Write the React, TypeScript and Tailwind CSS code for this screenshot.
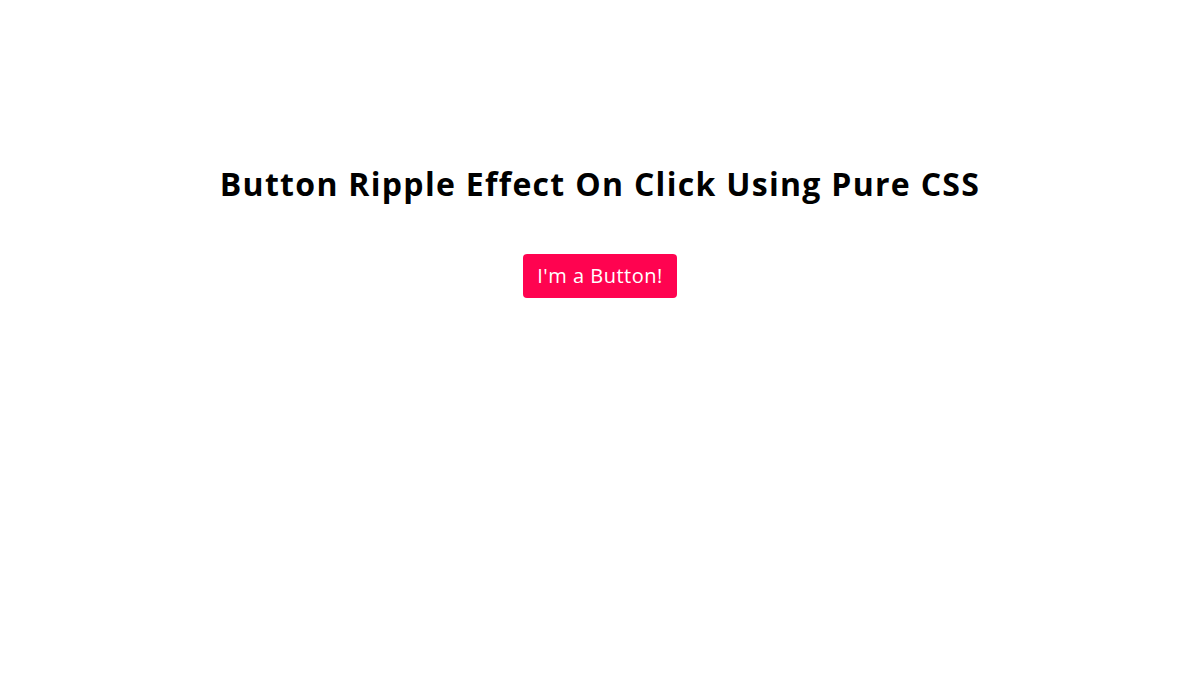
export default function App() {
  return (
    <div
      className="min-h-screen bg-white flex flex-col items-center pt-[163px]"
      style={{ fontFamily: '"Open Sans", "Noto Sans", sans-serif' }}
    >
      <h1 className="text-[32px] font-bold leading-[42px] text-black tracking-[1.3px]">
        Button Ripple Effect On Click Using Pure CSS
      </h1>
      <button className="mt-[49px] w-[154px] h-[44px] rounded-[4px] bg-[#ff0350] text-white text-[20px] leading-none tracking-[0.5px]">
        I'm a Button!
      </button>
    </div>
  );
}
